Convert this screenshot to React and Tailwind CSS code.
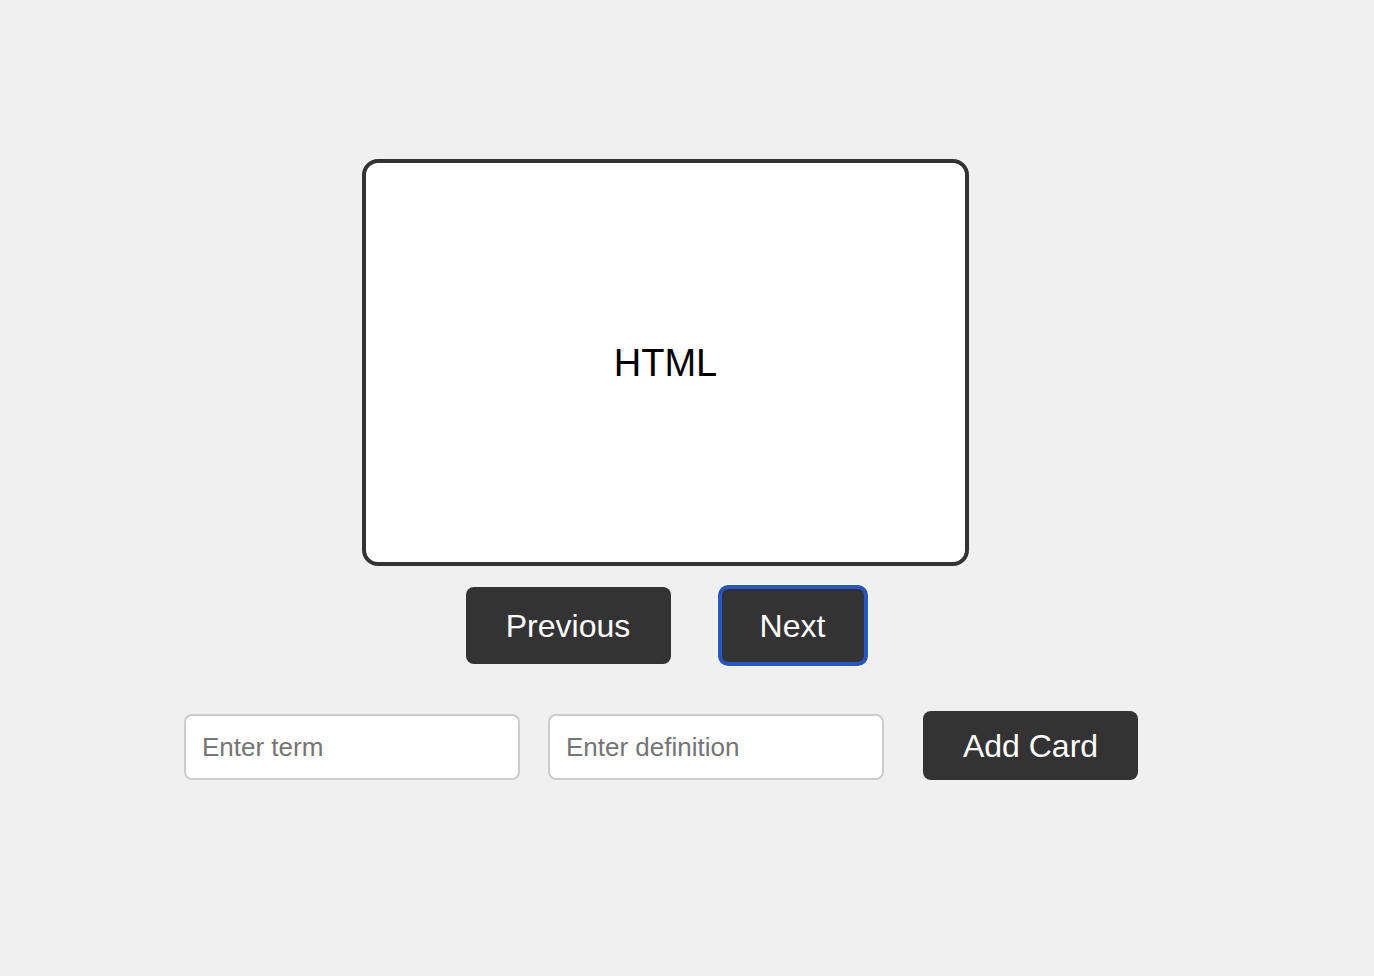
export default function App() {
  return (
    <div className="min-h-screen bg-[#f0f0f0] pt-[159px] font-['Liberation_Sans',Arial,sans-serif]">
      <div className="w-[1331px] flex flex-col items-center">
        {/* Flashcard */}
        <div className="w-[607px] h-[407px] bg-white border-4 border-[#333] rounded-[16px] flex items-center justify-center">
          <span className="text-[38px] text-black leading-none">HTML</span>
        </div>

        {/* Nav buttons */}
        <div className="flex gap-[49px] mt-[21px]">
          <button className="w-[205px] h-[77px] bg-[#333] text-white text-[32px] rounded-[8px]">
            Previous
          </button>
          <button className="w-[146px] h-[77px] bg-[#333] text-white text-[32px] rounded-[8px] shadow-[inset_0_0_0_2px_#2458c8,0_0_0_2px_#2458c8,0_0_0_3px_#fff]">
            Next
          </button>
        </div>

        {/* Add card form */}
        <div className="flex items-end mt-[47px] mr-[9px]">
          <input
            placeholder="Enter term"
            className="w-[336px] h-[66px] px-[16px] bg-white border-2 border-[#ccc] rounded-[8px] text-[26px] placeholder:text-[#757575] outline-none"
          />
          <input
            placeholder="Enter definition"
            className="w-[336px] h-[66px] px-[16px] ml-[28px] bg-white border-2 border-[#ccc] rounded-[8px] text-[26px] placeholder:text-[#757575] outline-none"
          />
          <button className="w-[215px] h-[69px] ml-[39px] bg-[#333] text-white text-[32px] rounded-[8px]">
            Add Card
          </button>
        </div>
      </div>
    </div>
  );
}
